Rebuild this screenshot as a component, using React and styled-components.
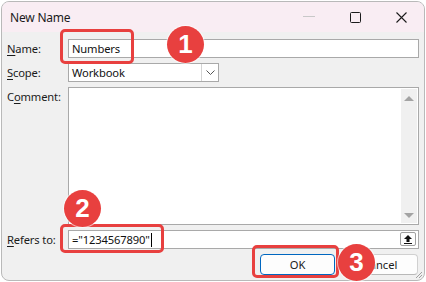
import React from "react";
import styled, { createGlobalStyle } from "styled-components";

const Global = createGlobalStyle`
  html, body { margin: 0; padding: 0; background: #ffffff; }
  body { font-family: "Noto Sans", "Open Sans", sans-serif; }
`;

const Stage = styled.div`
  position: relative;
  width: 426px;
  height: 282px;
  overflow: hidden;
  padding: 1px 0 0 1px;
  box-sizing: border-box;
`;

const Window = styled.div`
  width: 424px;
  height: 280px;
  box-sizing: border-box;
  border: 1px solid #b9b9b9;
  border-radius: 8px;
  background: #f0f0f0;
  overflow: hidden;
  display: flex;
  flex-direction: column;
  position: relative;
`;

const TitleBar = styled.div`
  height: 30px;
  flex: none;
  background: #f9edf3;
  display: flex;
  align-items: center;
  padding-left: 8px;
`;

const Title = styled.div`
  flex: 1;
  font-size: 12px;
  letter-spacing: -0.2px;
  color: #1b1b1b;
`;

const CtrlBtn = styled.div`
  width: 46px;
  height: 30px;
  display: flex;
  align-items: center;
  justify-content: center;
`;

const Content = styled.div`
  flex: 1;
  display: grid;
  grid-template-columns: 61px 1fr;
  grid-template-rows: 19px 19px 138px 19px 21px;
  row-gap: 5px;
  padding: 7px 5px 0 5px;
`;

const Label = styled.div`
  font-size: 11.2px;
  letter-spacing: -0.15px;
  color: #1b1b1b;
  line-height: 19px;
  u { text-decoration-thickness: 1px; text-underline-offset: 2px; }
`;

const TextField = styled.div`
  box-sizing: border-box;
  border: 1px solid #a9a9a9;
  background: #fff;
  height: 19px;
  display: flex;
  align-items: center;
  padding-left: 3px;
  font-size: 11.2px;
  letter-spacing: -0.15px;
  color: #111;
  position: relative;
  width: ${(p) => (p.$w ? p.$w + "px" : "auto")};
`;

const Caret = styled.span`
  display: inline-block;
  width: 1px;
  height: 14px;
  background: #000;
  margin-left: 1px;
`;

const DropBtn = styled.div`
  position: absolute;
  right: 0;
  top: 0;
  bottom: 0;
  width: 16px;
  border-left: 1px solid #d4d4d4;
  display: flex;
  align-items: center;
  justify-content: center;
  background: #fff;
`;

const TextArea = styled.div`
  box-sizing: border-box;
  border: 1px solid #a9a9a9;
  background: #fff;
  display: flex;
  justify-content: flex-end;
  padding: 1px;
`;

const ScrollBar = styled.div`
  width: 16px;
  background: #f0f0f0;
  display: flex;
  flex-direction: column;
  justify-content: space-between;
  align-items: center;
  padding: 7px 0 5px;
  box-sizing: border-box;
`;

const Arrow = styled.div`
  width: 0;
  height: 0;
  border-left: 5px solid transparent;
  border-right: 5px solid transparent;
  ${(p) =>
    p.$down
      ? "border-top: 5px solid #a3a3a3;"
      : "border-bottom: 5px solid #a3a3a3;"}
`;

const CollapseBtn = styled.div`
  position: absolute;
  right: 2px;
  top: 1px;
  width: 16px;
  height: 14px;
  box-sizing: border-box;
  border: 1px solid #a0a0a0;
  border-radius: 2px;
  background: #fdfdfd;
  display: flex;
  align-items: center;
  justify-content: center;
`;

const ButtonRow = styled.div`
  grid-column: 1 / span 2;
  display: flex;
  justify-content: flex-end;
  gap: 7px;
  padding-right: 1px;
`;

const Button = styled.div`
  width: ${(p) => p.$w}px;
  height: 21px;
  box-sizing: border-box;
  border: 1px solid ${(p) => (p.$primary ? "#0067c0" : "#d0d0d0")};
  border-bottom-color: ${(p) => (p.$primary ? "#0067c0" : "#b8b8b8")};
  border-radius: 4px;
  background: #fdfdfd;
  display: flex;
  align-items: center;
  justify-content: center;
  font-size: 11.2px;
  color: #1b1b1b;
`;

const Grip = styled.svg`
  position: absolute;
  right: 1px;
  bottom: 1px;
`;

const RedBox = styled.div`
  position: absolute;
  left: ${(p) => p.$x}px;
  top: ${(p) => p.$y}px;
  width: ${(p) => p.$w}px;
  height: ${(p) => p.$h}px;
  box-sizing: border-box;
  border: 3px solid #e8403f;
  border-radius: 5px;
`;

const Badge = styled.div`
  position: absolute;
  left: ${(p) => p.$x - 18}px;
  top: ${(p) => p.$y - 18}px;
  width: 37px;
  height: 37px;
  border-radius: 50%;
  background: #e8403f;
  color: #fff;
  font-family: "Liberation Sans", Arial, sans-serif;
  font-weight: bold;
  font-size: 26px;
  display: flex;
  align-items: center;
  justify-content: center;
  box-shadow: 0 0 0 1px rgba(255, 255, 255, 0.6);
`;

export default function App() {
  return (
    <Stage>
      <Global />
      <Window>
        <TitleBar>
          <Title>New Name</Title>
          <CtrlBtn>
            <svg width="12" height="2"><rect width="12" height="1" fill="#c8c8c8" /></svg>
          </CtrlBtn>
          <CtrlBtn>
            <svg width="11" height="11"><rect x="0.5" y="0.5" width="10" height="10" rx="1" fill="none" stroke="#1b1b1b" /></svg>
          </CtrlBtn>
          <CtrlBtn>
            <svg width="11" height="11"><path d="M0.5 0.5 L10.5 10.5 M10.5 0.5 L0.5 10.5" stroke="#1b1b1b" strokeWidth="1.1" /></svg>
          </CtrlBtn>
        </TitleBar>
        <Content>
          <Label><u>N</u>ame:</Label>
          <TextField>Numbers</TextField>
          <Label><u>S</u>cope:</Label>
          <TextField $w={151}>
            Workbook
            <DropBtn>
              <svg width="9" height="5"><path d="M0.5 0.5 L4.5 4.5 L8.5 0.5" fill="none" stroke="#555" /></svg>
            </DropBtn>
          </TextField>
          <Label>C<u>o</u>mment:</Label>
          <TextArea>
            <ScrollBar>
              <Arrow />
              <Arrow $down />
            </ScrollBar>
          </TextArea>
          <Label><u>R</u>efers to:</Label>
          <TextField>
            ="1234567890"<Caret />
            <CollapseBtn>
              <svg width="10" height="10"><path d="M5 1 L1 5 H3.5 V8 H6.5 V5 H9 Z" fill="#111" /><rect x="1" y="9" width="8" height="1" fill="#111" /></svg>
            </CollapseBtn>
          </TextField>
          <ButtonRow>
            <Button $w={75} $primary>OK</Button>
            <Button $w={76}>Cancel</Button>
          </ButtonRow>
        </Content>
        <Grip width="10" height="10">
          <path d="M9 3 L3 9 M9 6 L6 9" stroke="#a0a0a0" strokeWidth="1" />
        </Grip>
      </Window>
      <RedBox $x={60} $y={29} $w={74} $h={35} />
      <RedBox $x={60} $y={224} $w={104} $h={29} />
      <RedBox $x={252} $y={245} $w={87} $h={33} />
      <Badge $x={185} $y={44}>1</Badge>
      <Badge $x={82} $y={208}>2</Badge>
      <Badge $x={356} $y={262}>3</Badge>
    </Stage>
  );
}
